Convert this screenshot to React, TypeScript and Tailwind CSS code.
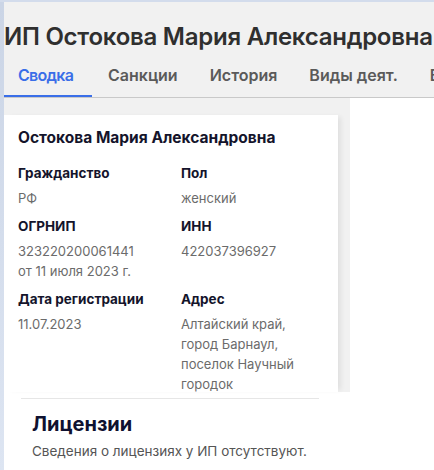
import React from "react";

const font = { fontFamily: "Inter, 'Noto Sans', sans-serif" };

function Field({ label, children }: { label: string; children: React.ReactNode }) {
  return (
    <div className="flex flex-col">
      <div className="text-[13.5px] font-bold leading-[18px] text-[#14142b]">{label}</div>
      <div className="mt-[6px] text-[13px] leading-[20px] text-[#6b6b6b]">{children}</div>
    </div>
  );
}

export default function App() {
  const tabs = ["Сводка", "Санкции", "История", "Виды деят.", "Виды"];
  return (
    <div className="flex h-[470px] w-[434px] flex-col overflow-hidden bg-white" style={font}>
      <div className="h-[2px] w-full shrink-0 bg-[#d3dcec]" />
      <div className="flex flex-1">
        <div className="w-[4px] shrink-0 bg-gradient-to-b from-[#cbd5e6] to-[#dde5f2]" />
        <div className="flex min-w-0 flex-1 flex-col">
          <header className="bg-[#f1f1f1]">
            <h1 className="whitespace-nowrap pt-[19px] text-[24px] font-semibold leading-[32px] tracking-[-0.25px] text-[#2f2f2f]">
              ИП Остокова Мария Александровна
            </h1>
            <nav className="mt-[9px] flex whitespace-nowrap border-b border-[#c9c9c9]">
              {tabs.map((t, i) => (
                <div
                  key={t}
                  className={
                    i === 0
                      ? "w-[88px] shrink-0 border-b-2 border-[#3a6ee8] pb-[10px] pl-[14px] pt-[3px] text-[16px] font-semibold leading-[20px] tracking-[-0.7px] text-[#3a6ee8]"
                      : "shrink-0 border-b-2 border-transparent px-[16px] pb-[10px] pt-[3px] text-[16px] font-semibold leading-[20px] text-[#5a5a5a]"
                  }
                >
                  {t}
                </div>
              ))}
            </nav>
          </header>
          <div className="flex h-[294px] shrink-0">
            <div className="w-[346px] shrink-0 bg-[#f1f1f1] pt-[17px]">
              <div className="h-full w-[334px] bg-white px-[14px] pt-[12px] shadow-[5px_0_5px_-2px_rgba(0,0,0,0.07)]">
                <div className="text-[15.5px] font-bold leading-[22px] text-[#14142b]">Остокова Мария Александровна</div>
                <div className="mt-[15px] grid grid-cols-[163px_1fr] gap-y-[9px]">
                  <Field label="Гражданство">РФ</Field>
                  <Field label="Пол">женский</Field>
                  <Field label="ОГРНИП">
                    323220200061441
                    <br />
                    от 11 июля 2023 г.
                  </Field>
                  <Field label="ИНН">422037396927</Field>
                  <Field label="Дата регистрации">11.07.2023</Field>
                  <Field label="Адрес">
                    Алтайский край,
                    <br />
                    город Барнаул,
                    <br />
                    поселок Научный
                    <br />
                    городок
                  </Field>
                </div>
              </div>
            </div>
            <div className="flex-1 bg-white" />
          </div>
          <section className="ml-[17px] mt-[6px] w-[298px] border-t border-[#e6e6e6] pl-[11px] pt-[11px]">
            <h2 className="text-[20px] font-bold leading-[28px] text-[#0f1130]">Лицензии</h2>
            <p className="mt-[4px] text-[13.5px] leading-[18px] text-[#555555]">
              Сведения о лицензиях у ИП отсутствуют.
            </p>
          </section>
        </div>
      </div>
    </div>
  );
}
